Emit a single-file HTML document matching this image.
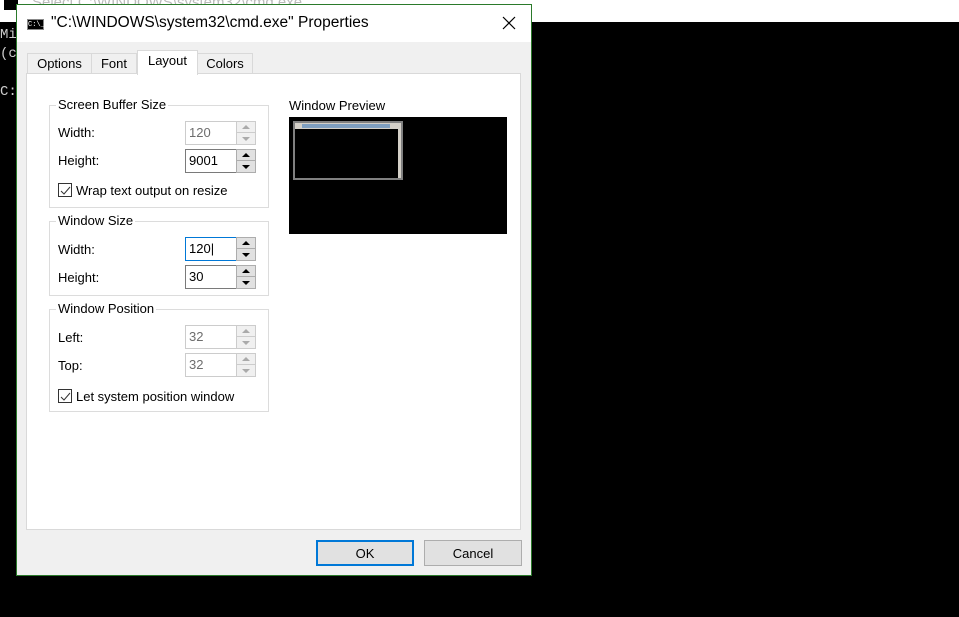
<!DOCTYPE html>
<html><head><meta charset="utf-8"><style>
*{box-sizing:border-box;margin:0;padding:0}
body{width:959px;height:617px;position:relative;background:#000;overflow:hidden;font-family:"Liberation Sans",sans-serif;font-size:13px;color:#000}
.a{position:absolute}
.grp{position:absolute;border:1px solid #dcdcdc}
.gl{position:absolute;top:-9px;left:6px;background:#fff;padding:0 2px;font-size:13px}
.lbl{position:absolute;font-size:13px}
.ed{position:absolute;width:52px;height:24px;border:1px solid #7a7a7a;background:#fff;padding:3px 0 0 3px;font-size:13px}
.ed.d{border-color:#ccc;color:#6d6d6d}
.ed.f{border-color:#0078d7}
.sp{position:absolute;width:20px;height:24px;border:1px solid #adadad;background:#e1e1e1}
.sp div{height:11px;position:relative;border-bottom:1px solid #adadad}
.sp div:last-child{border:none}
.sp span{position:absolute;left:5px;width:0;height:0;border-left:4px solid transparent;border-right:4px solid transparent}
.up span{top:3px;border-bottom:4px solid #000}
.dn span{top:4px;border-top:4px solid #000}
.sp.d{border-color:#ccc;background:#f0f0f0}
.sp.d div{border-color:#ccc}
.sp.d .up span{border-bottom-color:#aaa}.sp.d .dn span{border-top-color:#aaa}
.cb{position:absolute;width:14px;height:14px;border:1px solid #333;background:#fff}
.cb svg{position:absolute;left:1px;top:1px}
.tab{position:absolute;top:53px;height:21px;border:1px solid #d9d9d9;border-bottom:none;background:#f0f0f0;font-size:13px;padding-top:2px;text-align:center}
.btn{position:absolute;top:540px;height:26px;width:98px;background:#e1e1e1;border:1px solid #adadad;text-align:center;font-size:13px;padding-top:5px}
</style></head><body>
<div class="a" style="left:0;top:0;width:959px;height:22px;background:#fff"></div>
<div class="a" style="left:4px;top:0;width:14px;height:10px;background:#000"></div>
<div class="a" style="left:32px;top:-6px;color:#bbb;font-size:15px">Select C:\WINDOWS\system32\cmd.exe</div>
<div class="a" style="left:0;top:26px;color:#ccc;font-family:'Liberation Mono',monospace;font-size:14px;line-height:19px">Mi<br>(c<br><br>C:</div>
<div class="a" style="left:16px;top:4px;width:516px;height:572px;border:1px solid #2b7a2b;background:#f0f0f0">
 <div class="a" style="left:0;top:0;width:514px;height:37px;background:#fff"></div>
 <div class="a" style="left:10px;top:14px;width:17px;height:11px;background:#000;border:1px solid #888"></div>
 <div class="a" style="left:11px;top:16px;font-size:7px;color:#fff;font-family:'Liberation Mono',monospace">C:\_</div>
 <div class="a" style="left:34px;top:9px;font-size:15.5px">"C:\WINDOWS\system32\cmd.exe" Properties</div>
 <svg class="a" style="left:485px;top:11px" width="14" height="14"><path d="M1 1L13 13M13 1L1 13" stroke="#000" stroke-width="1.2"/></svg>
</div>
<div class="tab" style="left:27px;width:65px">Options</div>
<div class="tab" style="left:91px;width:46px">Font</div>
<div class="tab" style="left:197px;width:56px">Colors</div>
<div class="a" style="left:26px;top:73px;width:495px;height:457px;background:#fff;border:1px solid #d9d9d9"></div>
<div class="tab" style="left:137px;top:50px;width:61px;height:25px;background:#fff;z-index:2">Layout</div>

<div class="grp" style="left:49px;top:105px;width:220px;height:103px;"><div class="gl">Screen Buffer Size</div></div>
<div class="lbl" style="left:58px;top:125px">Width:</div>
<div class="lbl" style="left:58px;top:153px">Height:</div>
<div class="ed d" style="left:185px;top:121px">120</div><div class="sp d" style="left:236px;top:121px"><div class="up"><span></span></div><div class="dn"><span></span></div></div>
<div class="ed" style="left:185px;top:149px">9001</div><div class="sp" style="left:236px;top:149px"><div class="up"><span></span></div><div class="dn"><span></span></div></div>
<div class="cb" style="left:58px;top:183px"><svg width="11" height="11"><path d="M1 6L4 9L10 2" fill="none" stroke="#333"/></svg></div>
<div class="lbl" style="left:76px;top:183px">Wrap text output on resize</div>

<div class="grp" style="left:49px;top:221px;width:220px;height:75px;"><div class="gl">Window Size</div></div>
<div class="lbl" style="left:58px;top:242px">Width:</div>
<div class="lbl" style="left:58px;top:270px">Height:</div>
<div class="ed f" style="left:185px;top:237px">120|</div><div class="sp" style="left:236px;top:237px"><div class="up"><span></span></div><div class="dn"><span></span></div></div>
<div class="ed" style="left:185px;top:265px">30</div><div class="sp" style="left:236px;top:265px"><div class="up"><span></span></div><div class="dn"><span></span></div></div>

<div class="grp" style="left:49px;top:309px;width:220px;height:103px;"><div class="gl">Window Position</div></div>
<div class="lbl" style="left:58px;top:330px">Left:</div>
<div class="lbl" style="left:58px;top:358px">Top:</div>
<div class="ed d" style="left:185px;top:325px">32</div><div class="sp d" style="left:236px;top:325px"><div class="up"><span></span></div><div class="dn"><span></span></div></div>
<div class="ed d" style="left:185px;top:353px">32</div><div class="sp d" style="left:236px;top:353px"><div class="up"><span></span></div><div class="dn"><span></span></div></div>
<div class="cb" style="left:58px;top:389px"><svg width="11" height="11"><path d="M1 6L4 9L10 2" fill="none" stroke="#333"/></svg></div>
<div class="lbl" style="left:76px;top:389px">Let system position window</div>

<div class="lbl" style="left:289px;top:98px">Window Preview</div>
<div class="a" style="left:289px;top:117px;width:218px;height:117px;background:#000"></div>
<div class="a" style="left:293px;top:121px;width:110px;height:59px;border:2px solid #808080;background:#000">
 <div class="a" style="left:0;top:0;width:106px;height:6px;background:#d4d0c8"></div>
 <div class="a" style="left:7px;top:1px;width:88px;height:4px;background:#7f9fc0"></div>
 <div class="a" style="right:0;top:6px;width:3px;height:49px;background:#d4d0c8"></div>
</div>

<div class="btn" style="left:316px;border:2px solid #0078d7;padding-top:4px">OK</div>
<div class="btn" style="left:424px">Cancel</div>
</body></html>
